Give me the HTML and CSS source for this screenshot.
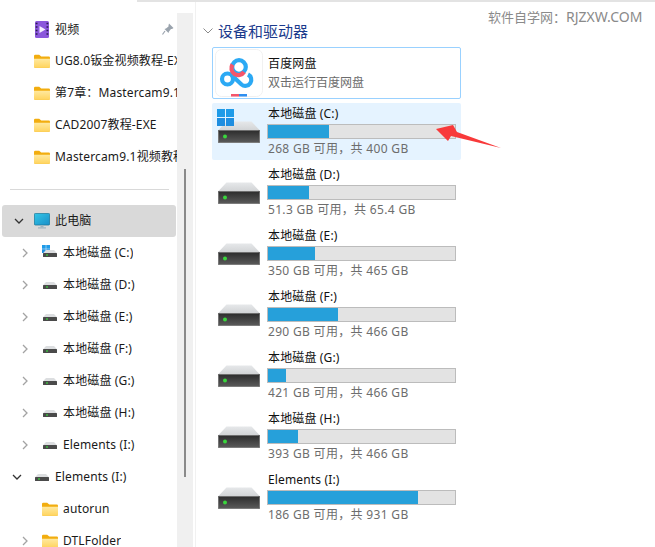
FILE: index.html
```html
<!DOCTYPE html>
<html lang="zh-CN">
<head>
<meta charset="utf-8">
<title>此电脑</title>
<link rel="stylesheet" href="styles.css">
</head>
<body>
<svg class="defs" width="0" height="0" aria-hidden="true">
  <defs>
    <linearGradient id="fb" x1="0" y1="0" x2="0" y2="1"><stop offset="0" stop-color="#ffe9a0"/><stop offset="1" stop-color="#ffd45e"/></linearGradient>
    <linearGradient id="db" x1="0" y1="0" x2="0" y2="1"><stop offset="0" stop-color="#2b2b2b"/><stop offset="1" stop-color="#5c5c5c"/></linearGradient>
    <linearGradient id="dt" x1="0" y1="0" x2="0" y2="1"><stop offset="0" stop-color="#e6e8ea"/><stop offset="1" stop-color="#d2d4d6"/></linearGradient>
    <linearGradient id="mon" x1="0" y1="0" x2="1" y2="1"><stop offset="0" stop-color="#33c6e6"/><stop offset="1" stop-color="#1a8fc9"/></linearGradient>
    <symbol id="folder" viewBox="0 0 16 14"><path d="M0 2a1.200 1.200 0 0 1 1.200-1.200h4l2 1.700h7.600A1.200 1.200 0 0 1 16 3.700V12.500a1.200 1.200 0 0 1-1.200 1.200H1.200A1.200 1.200 0 0 1 0 12.500z" fill="#f2ad0f"/><path d="M0 4.700h16v7.800a1.200 1.200 0 0 1-1.200 1.200H1.200A1.200 1.200 0 0 1 0 12.500z" fill="url(#fb)"/></symbol>
    <symbol id="drive" viewBox="0 0 42 22"><path d="M8.500 0.500h25L41.500 9h-41z" fill="url(#dt)"/><rect x="0" y="9" width="42" height="13" rx="1" fill="url(#db)"/><rect x="0.500" y="9.500" width="41" height="12" rx="0.800" fill="none" stroke="#8b8b8b" stroke-width="0.700"/><circle cx="7" cy="15.500" r="2" fill="#39d63c"/></symbol>
    <symbol id="sdrive" viewBox="0 0 14 7"><path d="M3 0h8l3 3.300H0z" fill="#dcdee0"/><rect y="3" width="14" height="4" rx="0.500" fill="#4a4a4a"/><rect x="3" y="4.400" width="2" height="1.200" fill="#39d63c"/></symbol>
    <symbol id="win" viewBox="0 0 17 17"><rect width="8" height="8" fill="#1f9be8"/><rect x="9" width="8" height="8" fill="#1f9be8"/><rect y="9" width="8" height="8" fill="#1f8ee0"/><rect x="9" y="9" width="8" height="8" fill="#1f8ee0"/></symbol>
    <symbol id="chev-r" viewBox="0 0 8 10"><path d="M2 1l4 4-4 4" fill="none" stroke="#a3a3a3" stroke-width="1.300"/></symbol>
    <symbol id="chev-d" viewBox="0 0 10 8"><path d="M1 2l4 4 4-4" fill="none" stroke="#333" stroke-width="1.300"/></symbol>
  </defs>
</svg>

<div class="topline"></div>
<div class="watermark">软件自学网：<span class="wm-latin">RJZXW.COM</span></div>

<div class="window">
  <nav class="nav">
    <div class="quick">
      <div class="row l1">
        <svg class="ic-video" viewBox="0 0 14 17"><rect width="14" height="17" rx="1.500" fill="#8b58dc"/><path d="M4.500 5l6 3.500-6 3.500z" fill="#f4efff"/><path d="M0.700 2.500h1.800M0.700 6h1.800M0.700 9.500h1.800M0.700 13h1.800M11.500 2.500h1.800M11.500 6h1.800M11.500 9.500h1.800M11.500 13h1.800" stroke="#2b1a4d" stroke-width="1.500"/></svg>
        <span class="label label-video">视频</span>
        <svg class="pin" viewBox="0 0 12 12" width="12" height="12"><path d="M7 0.500l4.500 4.500-1.500 1-1 0-2 2.500-.5 1.500-4-4 1.500-.5 2.500-2 0-1z" fill="#9aa3ad"/><path d="M3 8l-2.500 3.500" stroke="#9aa3ad" stroke-width="1.200"/></svg>
      </div>
      <div class="row l1"><svg class="ic-folder"><use href="#folder"/></svg><span class="label">UG8.0钣金视频教程-EXE</span></div>
      <div class="row l1"><svg class="ic-folder"><use href="#folder"/></svg><span class="label">第7章：Mastercam9.1视频教程</span></div>
      <div class="row l1"><svg class="ic-folder"><use href="#folder"/></svg><span class="label">CAD2007教程-EXE</span></div>
      <div class="row l1"><svg class="ic-folder"><use href="#folder"/></svg><span class="label">Mastercam9.1视频教程</span></div>
    </div>
    <div class="sep"></div>
    <div class="row l1 selected">
      <svg class="chev abs-d"><use href="#chev-d"/></svg>
      <svg class="ic-pc" viewBox="0 0 16 16" width="16" height="16"><rect x="0.400" y="0.400" width="15.200" height="11.600" rx="1" fill="url(#mon)" stroke="#1c7a9c" stroke-width="0.800"/><rect x="6.500" y="12.300" width="3" height="2" fill="#9fb4bf"/><rect x="4" y="14.300" width="8" height="1.200" fill="#9fb4bf"/></svg>
      <span class="label">此电脑</span>
    </div>
    <div class="row l2">
      <svg class="chev"><use href="#chev-r"/></svg>
      <span class="ic-small"><svg class="ic-win"><use href="#win"/></svg><svg class="ic-drive"><use href="#sdrive"/></svg></span>
      <span class="label">本地磁盘 (C:)</span>
    </div>
    <div class="row l2"><svg class="chev"><use href="#chev-r"/></svg><span class="ic-small"><svg class="ic-drive"><use href="#sdrive"/></svg></span><span class="label">本地磁盘 (D:)</span></div>
    <div class="row l2"><svg class="chev"><use href="#chev-r"/></svg><span class="ic-small"><svg class="ic-drive"><use href="#sdrive"/></svg></span><span class="label">本地磁盘 (E:)</span></div>
    <div class="row l2"><svg class="chev"><use href="#chev-r"/></svg><span class="ic-small"><svg class="ic-drive"><use href="#sdrive"/></svg></span><span class="label">本地磁盘 (F:)</span></div>
    <div class="row l2"><svg class="chev"><use href="#chev-r"/></svg><span class="ic-small"><svg class="ic-drive"><use href="#sdrive"/></svg></span><span class="label">本地磁盘 (G:)</span></div>
    <div class="row l2"><svg class="chev"><use href="#chev-r"/></svg><span class="ic-small"><svg class="ic-drive"><use href="#sdrive"/></svg></span><span class="label">本地磁盘 (H:)</span></div>
    <div class="row l2"><svg class="chev"><use href="#chev-r"/></svg><span class="ic-small"><svg class="ic-drive"><use href="#sdrive"/></svg></span><span class="label">Elements (I:)</span></div>
    <div class="row l1b"><svg class="chev abs-d"><use href="#chev-d"/></svg><span class="ic-small"><svg class="ic-drive"><use href="#sdrive"/></svg></span><span class="label">Elements (I:)</span></div>
    <div class="row l3"><svg class="ic-folder"><use href="#folder"/></svg><span class="label">autorun</span></div>
    <div class="row l2"><svg class="chev"><use href="#chev-r"/></svg><svg class="ic-folder"><use href="#folder"/></svg><span class="label">DTLFolder</span></div>
  </nav>

  <div class="scrolltrack"><div class="thumb"></div></div>

  <main class="main">
    <header class="group">
      <svg class="group-chev" viewBox="0 0 10 6" width="10" height="6"><path d="M0.500 0.500L5 5l4.500-4.500" fill="none" stroke="#8a8a8a" stroke-width="1"/></svg>
      <h2 class="group-title">设备和驱动器</h2>
    </header>
    <div class="tiles">
      <div class="tile app">
        <div class="app-icon">
          <svg viewBox="0 0 48 48" width="48" height="48">
            <rect x="0.500" y="0.500" width="47" height="47" rx="6" fill="#fff" stroke="#f1f1f1"/>
            <circle cx="12.500" cy="30" r="5.500" fill="none" stroke="#2ba9f4" stroke-width="4.200"/>
            <path d="M16.500 26L26.500 35.500a6 6 0 1 0 6.500-10" fill="none" stroke="#2ba9f4" stroke-width="4.200"/>
            <circle cx="24" cy="18" r="6.800" fill="none" stroke="#2ba9f4" stroke-width="4.200"/>
            <path d="M17.500 15.500a6.800 6.800 0 0 0 11.500 7.500" fill="none" stroke="#f4566c" stroke-width="4.200"/>
            <rect x="16" y="45" width="8" height="2.500" fill="#f4566c"/><rect x="24" y="45" width="8" height="2.500" fill="#2f8ff0"/>
          </svg>
        </div>
        <div class="app-text"><div class="name">百度网盘</div><div class="sub">双击运行百度网盘</div></div>
      </div>

      <div class="tile drive current">
        <div class="drive-icon"><svg class="big-drive"><use href="#drive"/></svg><svg class="big-win"><use href="#win"/></svg></div>
        <div class="info"><div class="name">本地磁盘 (C:)</div><div class="bar"><div class="fill" style="width:32.600%"></div></div><div class="sub">268 GB 可用，共 400 GB</div></div>
      </div>
      <div class="tile drive">
        <div class="drive-icon"><svg class="big-drive"><use href="#drive"/></svg></div>
        <div class="info"><div class="name">本地磁盘 (D:)</div><div class="bar"><div class="fill" style="width:21.900%"></div></div><div class="sub">51.3 GB 可用，共 65.4 GB</div></div>
      </div>
      <div class="tile drive">
        <div class="drive-icon"><svg class="big-drive"><use href="#drive"/></svg></div>
        <div class="info"><div class="name">本地磁盘 (E:)</div><div class="bar"><div class="fill" style="width:25.100%"></div></div><div class="sub">350 GB 可用，共 465 GB</div></div>
      </div>
      <div class="tile drive">
        <div class="drive-icon"><svg class="big-drive"><use href="#drive"/></svg></div>
        <div class="info"><div class="name">本地磁盘 (F:)</div><div class="bar"><div class="fill" style="width:37.400%"></div></div><div class="sub">290 GB 可用，共 466 GB</div></div>
      </div>
      <div class="tile drive">
        <div class="drive-icon"><svg class="big-drive"><use href="#drive"/></svg></div>
        <div class="info"><div class="name">本地磁盘 (G:)</div><div class="bar"><div class="fill" style="width:9.600%"></div></div><div class="sub">421 GB 可用，共 466 GB</div></div>
      </div>
      <div class="tile drive">
        <div class="drive-icon"><svg class="big-drive"><use href="#drive"/></svg></div>
        <div class="info"><div class="name">本地磁盘 (H:)</div><div class="bar"><div class="fill" style="width:16%"></div></div><div class="sub">393 GB 可用，共 466 GB</div></div>
      </div>
      <div class="tile drive">
        <div class="drive-icon"><svg class="big-drive"><use href="#drive"/></svg></div>
        <div class="info"><div class="name">Elements (I:)</div><div class="bar"><div class="fill" style="width:80.200%"></div></div><div class="sub">186 GB 可用，共 931 GB</div></div>
      </div>
    </div>
  </main>
</div>

<svg class="arrow" viewBox="0 0 66 36" width="66" height="36"><path d="M1 14L18 10l4 7 44 16-50-12-3 5z" fill="#f8393a"/></svg>
</body>
</html>
```

FILE: styles.css
```css
* { box-sizing: border-box; }
html, body { margin: 0; padding: 0; height: 100%; }
body {
  position: relative;
  overflow: hidden;
  background: #fff;
  font-family: "Noto Sans", "Noto Sans CJK SC", sans-serif;
  font-size: 12px;
  color: #1a1a1a;
}
.defs { position: absolute; }
.topline { position: absolute; top: 0; left: 137px; right: 0; height: 2px; background: #e3e3e3; }
.watermark { position: absolute; top: 8px; left: 488px; font-size: 13px; line-height: 18px; color: #8a8a8a; }
.wm-latin { font-size: 14px; }
.arrow { position: absolute; left: 435px; top: 115px; }

.window { display: flex; height: 547px; overflow: hidden; }

.nav { width: 177px; flex: none; padding-top: 13px; overflow: hidden; }
.row { display: flex; align-items: center; height: 32px; white-space: nowrap; position: relative; }
.label { overflow: hidden; line-height: 16px; letter-spacing: 0.15px; }
.label-video { margin-top: 1px; }
.l1 { padding-left: 34px; }
.l1 .ic-folder { flex: none; width: 16px; height: 14px; margin-right: 5px; }
.l1 .ic-video { flex: none; width: 14px; height: 17px; margin: 0 6px 0 1px; }
.l1 .label { width: 122px; flex: none; }
.l1b { padding-left: 34px; }
.l1b .ic-small { margin-right: 6px; }
.l2 { padding-left: 42px; }
.l3 { padding-left: 42px; }
.l2 .ic-small { margin-right: 6px; }
.l2 .ic-folder, .l3 .ic-folder { width: 16px; height: 14px; margin-right: 5px; flex: none; }
.ic-small { position: relative; display: block; width: 15px; height: 7px; flex: none; }
.ic-drive { position: absolute; left: 1px; top: 0; width: 14px; height: 7px; }
.ic-win { position: absolute; left: 0; top: -5px; width: 8px; height: 8px; }
.chev { position: absolute; left: 21px; top: 11px; width: 8px; height: 10px; }
.chev.abs-d { left: 12px; top: 12px; width: 10px; height: 8px; }
.pin { position: absolute; left: 162px; top: 10px; }
.sep { height: 1px; margin: 16px 8px 15px 10px; background: #d9d9d9; }
.selected { background: #d9d9d9; border-radius: 3px; margin-left: 2px; margin-right: 1px; padding-left: 32px; }
.ic-pc { flex: none; margin-right: 5px; }
.selected .label { width: auto; }

.scrolltrack { width: 16px; flex: none; margin-top: 13px; background: #f0f0f0; position: relative; }
.thumb { position: absolute; left: 7px; top: 156px; width: 2px; height: 308px; background: #8a8a8a; }

.main { flex: 1; margin-left: 2px; border-left: 1px solid #f1f1f1; padding: 16px 0 0 16px; }
.group { display: flex; align-items: center; height: 30px; margin-left: -9px; }
.group-chev { margin-right: 5px; }
.group-title { margin: 0; font-size: 15px; font-weight: 400; color: #1a3a8c; line-height: 20px; }

.tiles { width: 249px; margin-top: 1px; display: flex; flex-direction: column; }
.tile { display: flex; width: 249px; border-radius: 2px; }
.app { height: 52px; border: 1px solid #99d1ff; padding: 1px 2px; margin-bottom: 4px; }
.app-icon { width: 48px; height: 48px; flex: none; }
.app-text { margin-left: 5px; padding-top: 5px; }
.name { font-size: 12px; line-height: 18px; color: #111; white-space: nowrap; padding-left: 1px; letter-spacing: 0.15px; }
.app-text .name { line-height: 20px; padding-left: 0; }
.sub { font-size: 12px; line-height: 18px; color: #6d6d6d; white-space: nowrap; padding-left: 1px; letter-spacing: 0.32px; }
.app-text .sub { padding-left: 0; letter-spacing: 0; }

.drive { height: 61px; }
.current { height: 57px; margin-bottom: 3px; background: #e5f3ff; }
.drive-icon { position: relative; width: 55px; flex: none; padding: 19px 0 0 6px; }
.current .drive-icon { padding-top: 18px; }
.big-drive { display: block; width: 42px; height: 22px; }
.big-win { position: absolute; left: 5px; top: 6px; width: 17px; height: 17px; }
.info { width: 189px; padding-top: 3px; flex: none; }
.current .info { padding-top: 2px; }
.bar { height: 15px; margin: 1px 0; background: #e3e3e3; border: 1px solid #bcbcbc; }
.fill { height: 100%; background: #26a0da; }
```
